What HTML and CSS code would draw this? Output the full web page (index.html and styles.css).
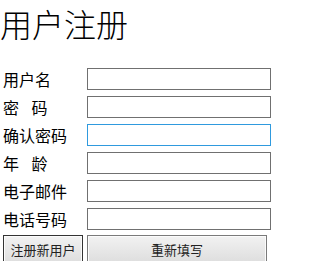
FILE: index.html
```html
<!DOCTYPE html>
<html lang="zh-CN">
<head>
<meta charset="utf-8">
<title>用户注册</title>
<link rel="stylesheet" href="styles.css">
</head>
<body>
<h1 class="title">用户注册</h1>
<form class="form">
  <label class="label">用户名</label>
  <input class="field" type="text">
  <label class="label spaced">密 码</label>
  <input class="field" type="password">
  <label class="label">确认密码</label>
  <input class="field focused" type="password">
  <label class="label spaced">年 龄</label>
  <input class="field" type="text">
  <label class="label">电子邮件</label>
  <input class="field" type="text">
  <label class="label">电话号码</label>
  <input class="field" type="text">
  <div class="actions">
    <button class="btn btn-default" type="button">注册新用户</button>
    <button class="btn btn-reset" type="reset">重新填写</button>
  </div>
</form>
</body>
</html>
```
FILE: styles.css
```css
html, body {
  margin: 0;
  padding: 0;
  background: #ffffff;
}
body {
  font-family: "Noto Sans CJK SC", "Noto Sans", sans-serif;
  color: #000;
}
.title {
  margin: 0 0 26px 0;
  padding-top: 7px;
  font-size: 32px;
  line-height: 32px;
  font-weight: 300;
  height: 32px;
}
.form {
  display: grid;
  grid-template-columns: 84px 184px;
  grid-auto-rows: 28px;
  margin-left: 3px;
}
.label {
  font-size: 16px;
  line-height: 28px;
  white-space: pre;
}
.spaced {
  word-spacing: 9px;
}
.field {
  box-sizing: border-box;
  width: 184px;
  height: 22px;
  margin: 0;
  align-self: center;
  border: 1px solid #707070;
  padding: 0 2px;
  background: #fff;
  outline: none;
  font-size: 13px;
}
.focused {
  border-color: #2f9ade;
}
.actions {
  grid-column: 1 / span 2;
  display: flex;
  gap: 4px;
  padding-top: 2px;
  height: 28px;
}
.btn {
  box-sizing: border-box;
  height: 28px;
  margin: 0;
  padding: 0;
  font-family: "Noto Sans CJK SC", "Noto Sans", sans-serif;
  font-size: 13px;
  color: #222;
  background: linear-gradient(#f2f2f2, #dedede);
  border: 1px solid #7a7a7a;
  box-shadow: inset 0 0 0 1px #fbfbfb;
  border-radius: 0;
}
.btn-default {
  width: 80px;
  border-color: #333333;
}
.btn-reset {
  width: 180px;
}
```
